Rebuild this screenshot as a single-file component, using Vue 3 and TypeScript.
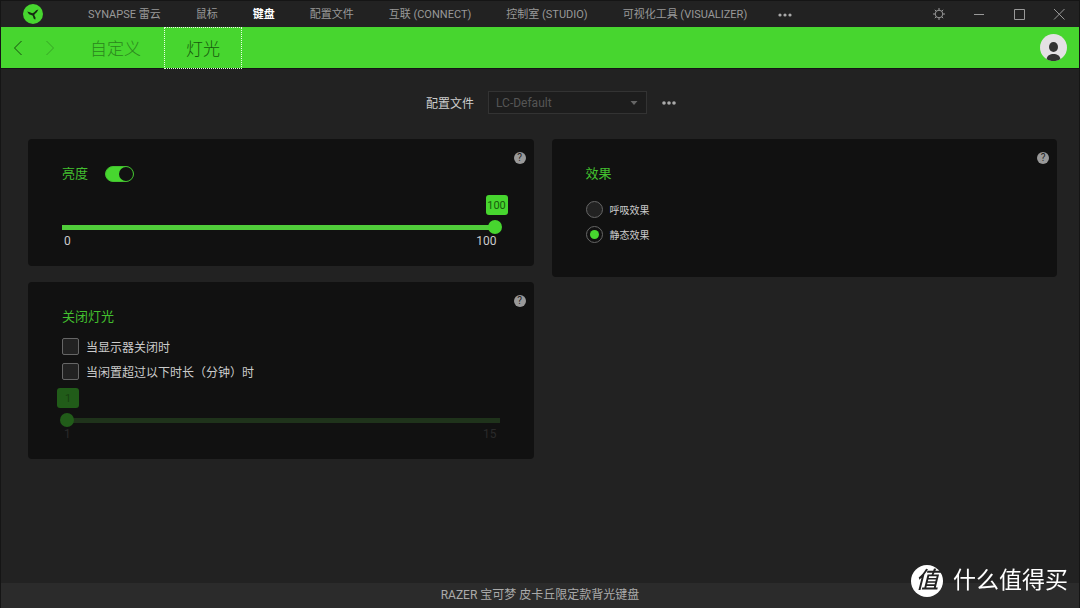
<script setup lang="ts">
import { computed, ref } from 'vue'

const modules = [
  'SYNAPSE 雷云',
  '鼠标',
  '键盘',
  '配置文件',
  '互联 (CONNECT)',
  '控制室 (STUDIO)',
  '可视化工具 (VISUALIZER)',
]
const activeModule = ref('键盘')

const tabs = ['自定义', '灯光']
const activeTab = ref('灯光')

const profile = ref('LC-Default')
const brightnessOn = ref(true)
const brightness = ref(100)
const effect = ref('static')
const effects = [
  { value: 'breathing', label: '呼吸效果' },
  { value: 'static', label: '静态效果' },
]
const offWithDisplay = ref(false)
const offWhenIdle = ref(false)
const idleMinutes = ref(1)

function bubbleOffset(value: number, min: number, max: number): string {
  return `calc((100% - 22px) * ${(value - min) / (max - min)})`
}
const brightnessOffset = computed(() => bubbleOffset(brightness.value, 0, 100))
const idleOffset = computed(() => bubbleOffset(idleMinutes.value, 1, 15))
</script>

<template>
  <div class="window">
    <header class="titlebar">
      <svg class="logo" viewBox="0 0 20 20" aria-hidden="true">
        <circle cx="10" cy="10" r="10" fill="#47d62f" />
        <path
          d="M4.200 7.600 6.800 8.200 9.300 9.200 11 8.400 13.200 6.200 15.400 5.500 13.800 8.200 11.600 10.200 11.400 11.600 12.600 13.800 12.200 15.800 10.600 14.400 9.800 11.800 8.800 11.200 6 10.200Z"
          fill="#162b12"
        />
      </svg>
      <nav class="modules">
        <a
          v-for="item in modules"
          :key="item"
          href="#"
          :class="{ active: item === activeModule }"
          @click.prevent="activeModule = item"
          >{{ item }}</a
        >
        <button class="more" type="button" aria-label="更多模块">
          <svg viewBox="0 0 14 4"><circle cx="2" cy="2" r="1.6" /><circle cx="7" cy="2" r="1.6" /><circle cx="12" cy="2" r="1.6" /></svg>
        </button>
      </nav>
      <div class="window-controls">
        <button type="button" aria-label="设置">
          <svg viewBox="0 0 12 12">
            <circle cx="6" cy="6" r="3.8" />
            <path d="M6 0v2.200M6 9.800V12M0 6h2.200M9.800 6H12M1.800 1.800l1.500 1.500M8.700 8.700l1.500 1.500M1.800 10.200l1.500-1.500M8.700 3.300l1.500-1.500" />
          </svg>
        </button>
        <button type="button" aria-label="最小化">
          <svg viewBox="0 0 12 12"><path d="M1 6.5h10" /></svg>
        </button>
        <button type="button" aria-label="最大化">
          <svg viewBox="0 0 12 12"><path d="M1.5 1.5h10v10h-10z" /></svg>
        </button>
        <button type="button" aria-label="关闭">
          <svg viewBox="0 0 12 12"><path d="M1 1l10.500 10.500M11.500 1 1 11.500" /></svg>
        </button>
      </div>
    </header>

    <div class="tabbar">
      <button class="arrow" type="button" aria-label="后退">
        <svg viewBox="0 0 10 16"><path d="M8.5 1 1.5 8l7 7" /></svg>
      </button>
      <button class="arrow" type="button" aria-label="前进" disabled>
        <svg viewBox="0 0 10 16"><path d="M1.5 1l7 7-7 7" /></svg>
      </button>
      <div class="tabs">
        <button
          v-for="tab in tabs"
          :key="tab"
          type="button"
          :class="{ active: tab === activeTab }"
          @click="activeTab = tab"
        >
          {{ tab }}
        </button>
      </div>
      <button class="avatar" type="button" aria-label="账户">
        <svg viewBox="0 0 27 27">
          <circle cx="13.5" cy="13.5" r="13.5" fill="#e4e1e4" />
          <ellipse cx="13.5" cy="13" rx="4.5" ry="5" fill="#333" />
          <path d="M6.6 25c.6-3.6 3.4-5 6.9-5s6.300 1.400 6.900 5c-2 1.400-4.300 2-6.900 2s-4.900-.6-6.900-2z" fill="#333" />
        </svg>
      </button>
    </div>

    <main>
      <div class="profile">
        <label for="profile">配置文件</label>
        <div class="select">
          <select id="profile" v-model="profile">
            <option>LC-Default</option>
          </select>
          <svg viewBox="0 0 8 4" aria-hidden="true"><path d="M.5 0h7L4 4z" /></svg>
        </div>
        <button class="more" type="button" aria-label="更多配置文件选项">
          <svg viewBox="0 0 14 4"><circle cx="2" cy="2" r="1.8" /><circle cx="7" cy="2" r="1.8" /><circle cx="12" cy="2" r="1.8" /></svg>
        </button>
      </div>

      <div class="columns">
        <div class="column">
          <section class="card">
            <button class="help" type="button" aria-label="亮度帮助">?</button>
            <div class="heading">
              <h2 id="brightness-title">亮度</h2>
              <input v-model="brightnessOn" class="switch" type="checkbox" role="switch" aria-labelledby="brightness-title" />
            </div>
            <div class="slider">
              <div class="bubble-row">
                <output for="brightness" :style="{ marginLeft: brightnessOffset }">{{ brightness }}</output>
              </div>
              <input id="brightness" v-model.number="brightness" type="range" min="0" max="100" aria-labelledby="brightness-title" />
              <div class="scale"><span>0</span><span>100</span></div>
            </div>
          </section>

          <section class="card">
            <button class="help" type="button" aria-label="关闭灯光帮助">?</button>
            <div class="heading"><h2>关闭灯光</h2></div>
            <div class="checks">
              <label><input v-model="offWithDisplay" type="checkbox" />当显示器关闭时</label>
              <label><input v-model="offWhenIdle" type="checkbox" />当闲置超过以下时长（分钟）时</label>
            </div>
            <div class="slider" :class="{ disabled: !offWhenIdle }">
              <div class="bubble-row">
                <output for="idle" :style="{ marginLeft: idleOffset }">{{ idleMinutes }}</output>
              </div>
              <input id="idle" v-model.number="idleMinutes" type="range" min="1" max="15" :disabled="!offWhenIdle" aria-label="闲置分钟" />
              <div class="scale"><span>1</span><span>15</span></div>
            </div>
          </section>
        </div>

        <div class="column">
          <section class="card effects">
            <button class="help" type="button" aria-label="效果帮助">?</button>
            <div class="heading"><h2>效果</h2></div>
            <div class="radios">
              <label v-for="item in effects" :key="item.value">
                <input v-model="effect" type="radio" name="effect" :value="item.value" />{{ item.label }}
              </label>
            </div>
          </section>
        </div>
      </div>
    </main>

    <footer>RAZER 宝可梦 皮卡丘限定款背光键盘</footer>

    <div class="watermark"><span class="seal">值</span>什么值得买</div>
  </div>
</template>

<style>
body {
  background: #222;
}
</style>

<style scoped>
.window {
  --green: #47d62f;
  display: flex;
  flex-direction: column;
  min-height: 100vh;
  box-sizing: border-box;
  border: 1px solid #151515;
  border-bottom: 0;
  background: #222;
  color: #ccc;
  font-family: Roboto, 'Noto Sans CJK SC', sans-serif;
  font-size: 12px;
}
button,
select,
input {
  margin: 0;
  padding: 0;
  border: 0;
  background: none;
  color: inherit;
  font: inherit;
}
svg {
  display: block;
}

.titlebar {
  display: flex;
  align-items: center;
  height: 26px;
}
.logo {
  width: 20px;
  height: 20px;
  margin: 0 45px 0 22px;
}
.modules {
  display: flex;
  align-items: center;
  gap: 35px;
  flex: 1;
  font-size: 11px;
  line-height: 24px;
  padding-top: 2px;
  white-space: nowrap;
}
.modules a {
  color: #999;
  text-decoration: none;
}
.modules a.active {
  color: #fff;
  font-weight: 700;
}
.more svg {
  width: 14px;
  height: 4px;
  fill: #aaa;
}
.modules .more {
  margin-left: -4px;
}
.window-controls {
  display: flex;
}
.window-controls button {
  display: flex;
  justify-content: center;
  align-items: center;
  width: 40px;
  height: 26px;
}
.window-controls svg {
  width: 12px;
  height: 12px;
  fill: none;
  stroke: #999;
}

.tabbar {
  display: flex;
  align-items: center;
  height: 41px;
  border-bottom: 1px solid #151515;
  background: var(--green);
}
.arrow {
  width: 10px;
  margin-left: 12px;
}
.arrow + .arrow {
  margin-left: 22px;
}
.arrow svg {
  width: 10px;
  height: 16px;
  fill: none;
  stroke: #174d0f;
}
.arrow:disabled svg {
  stroke: #36a524;
}
.tabs {
  display: flex;
  gap: 1px;
  flex: 1;
  align-self: stretch;
  margin-left: 13px;
}
.tabs button {
  height: 42px;
  padding: 0 21px 2px;
  border: 1px solid transparent;
  color: #2b851d;
  font-size: 17px;
  font-weight: 300;
}
.tabs button.active {
  border: 1px dotted #e8ffe4;
  color: #175a0d;
}
.avatar {
  margin-right: 12px;
}
.avatar svg {
  width: 27px;
  height: 27px;
}

main {
  flex: 1;
  padding: 22px 22px 24px 27px;
}
.profile {
  display: flex;
  justify-content: center;
  align-items: center;
  margin-bottom: 25px;
  padding-left: 17px;
}
.select {
  position: relative;
  width: 159px;
  margin: 0 15px 0 14px;
}
.select select {
  display: block;
  width: 100%;
  height: 23px;
  padding: 0 24px 0 7px;
  border: 1px solid #333;
  appearance: none;
  background: #1d1d1d;
  color: #555;
}
.select svg {
  position: absolute;
  top: 10px;
  right: 9px;
  width: 8px;
  height: 4px;
  fill: #666;
  pointer-events: none;
}

.columns {
  display: grid;
  grid-template-columns: 1fr 1fr;
  align-items: start;
  gap: 18px;
}
.column {
  display: grid;
  gap: 16px;
}
.card {
  position: relative;
  padding: 25px 34px 18px;
  border-radius: 4px;
  background: #111;
}
.help {
  position: absolute;
  top: 13px;
  right: 8px;
  width: 12px;
  height: 12px;
  border-radius: 50%;
  background: #999;
  color: #222;
  font-size: 10px;
  line-height: 12px;
}
.heading {
  display: flex;
  align-items: center;
  gap: 17px;
  height: 20px;
}
h2 {
  margin: 0;
  color: #43c02f;
  font-size: 13px;
  font-weight: 400;
  line-height: 20px;
}
.switch {
  width: 29px;
  height: 16px;
  box-sizing: border-box;
  border: 1px solid #43c02f;
  border-radius: 8px;
  appearance: none;
  background: #111;
}
.switch::before {
  content: '';
  display: block;
  width: 14px;
  height: 14px;
  border-radius: 50%;
  background: #777;
}
.switch:checked {
  background: var(--green);
}
.switch:checked::before {
  margin-left: 13px;
  background: #111;
}

.slider {
  --track: #50cd3a;
  margin-top: 11px;
}
.bubble-row {
  margin: 0 -8px 0 -5px;
}
output {
  display: block;
  width: 22px;
  height: 20px;
  border-radius: 3px;
  background: var(--green);
  color: #175a0d;
  font-size: 11px;
  line-height: 21px;
  text-align: center;
}
input[type='range'] {
  display: block;
  width: calc(100% + 4px);
  height: 14px;
  margin: 5px -2px 0;
  appearance: none;
}
input[type='range']::-webkit-slider-runnable-track {
  height: 5px;
  background: linear-gradient(var(--track), var(--track)) center / calc(100% - 4px) 100% no-repeat;
}
input[type='range']::-webkit-slider-thumb {
  width: 14px;
  height: 14px;
  margin-top: -5px;
  border-radius: 50%;
  appearance: none;
  background: var(--green);
}
.scale {
  display: flex;
  justify-content: space-between;
  padding: 0 3px 0 2px;
  line-height: 14px;
}
.disabled {
  --track: #1f331b;
  margin-top: 8px;
}
.disabled output {
  background: #215c19;
  color: #174010;
}
.disabled input[type='range']::-webkit-slider-thumb {
  background: #215c19;
}
.disabled .scale {
  color: #2a2a2a;
}

.checks,
.radios {
  display: grid;
  gap: 8px;
  margin-top: 11px;
}
.checks label,
.radios label {
  display: flex;
  align-items: center;
  gap: 7px;
  height: 17px;
}
.checks input,
.radios input {
  width: 17px;
  height: 17px;
  box-sizing: border-box;
  border: 1px solid #666;
  border-radius: 2px;
  appearance: none;
  background: #222;
}
.checks input:checked {
  background: var(--green);
}
.radios {
  margin-top: 17px;
  font-size: 10px;
}
.radios input {
  border-radius: 50%;
}
.radios input:checked {
  padding: 3px;
  background: var(--green) content-box;
}
.effects {
  padding-bottom: 34px;
}

footer {
  background: #2b2b2b;
  color: #aaa;
  line-height: 25px;
  text-align: center;
}

.watermark {
  position: fixed;
  right: 12px;
  bottom: 11px;
  display: flex;
  align-items: center;
  gap: 10px;
  color: #fff;
  font-size: 23px;
  line-height: 32px;
}
.seal {
  width: 32px;
  height: 32px;
  border-radius: 50%;
  background: #fff;
  color: #222;
  font-weight: 500;
  font-style: italic;
  text-align: center;
}
</style>
